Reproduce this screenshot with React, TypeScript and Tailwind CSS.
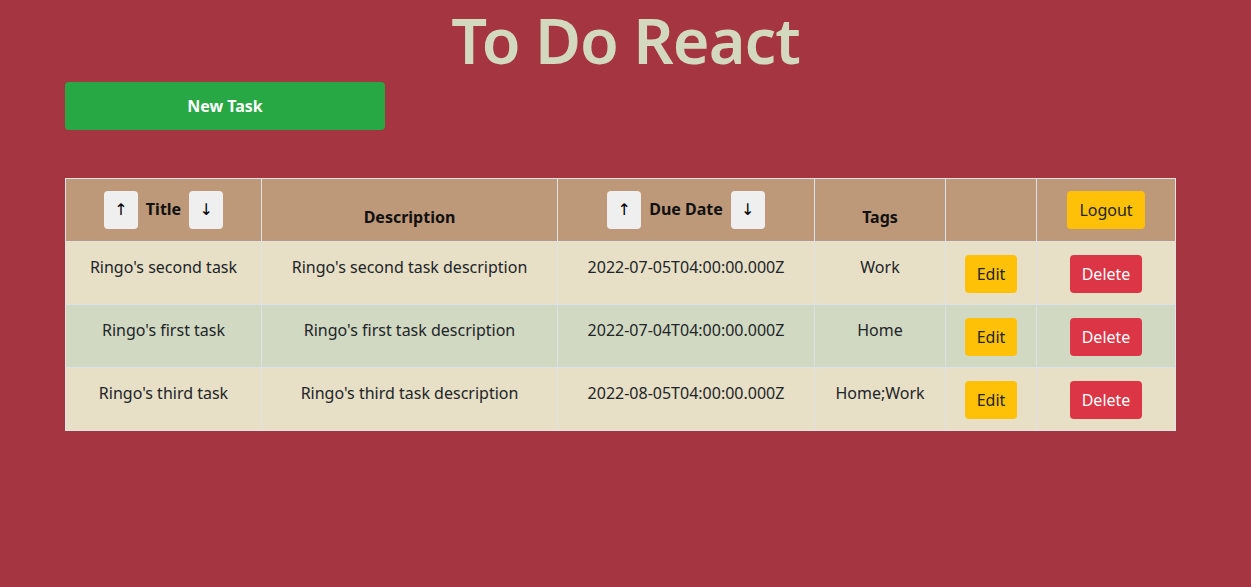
import React from "react";

const rows = [
  { title: "Ringo's second task", desc: "Ringo's second task description", due: "2022-07-05T04:00:00.000Z", tags: "Work", bg: "bg-[#e7dfc6]" },
  { title: "Ringo's first task", desc: "Ringo's first task description", due: "2022-07-04T04:00:00.000Z", tags: "Home", bg: "bg-[#d2d9c2]" },
  { title: "Ringo's third task", desc: "Ringo's third task description", due: "2022-08-05T04:00:00.000Z", tags: "Home;Work", bg: "bg-[#e7dfc6]" },
];

function ArrowBtn({ children }: { children: React.ReactNode }) {
  return (
    <button className="inline-block align-baseline w-[34px] bg-[#efefef] rounded-[4px] px-0 py-[7px] leading-6 text-[16px] text-black font-normal font-['DejaVu_Sans',sans-serif]">
      {children}
    </button>
  );
}

export default function App() {
  const th = "border border-[#dee2e6] px-3 py-3 align-bottom text-center font-bold text-[16px] leading-6 text-[#111]";
  const td = "border border-[#dee2e6] px-3 pt-3 pb-3 align-top text-center text-[16px] leading-6 text-[#212529]";
  const tdBtn = "border border-[#dee2e6] px-3 pt-[13px] pb-[11px] align-top text-center text-[16px] leading-6";
  return (
    <div className="min-h-[587px] w-full bg-[#a53541] font-['Noto_Sans',sans-serif]">
      <h1 className="text-center text-[63px] font-semibold leading-[80px] tracking-[-1px] text-[#d3d9bf]">To Do React</h1>
      <div className="pl-[65px] pt-[2px]">
        <button className="w-[320px] h-[48px] rounded-[4px] bg-[#28a745] text-white font-bold text-[16px]">New Task</button>
        <table className="mt-[48px] w-[1111px] table-fixed border-collapse">
          <colgroup>
            <col className="w-[196px]" />
            <col className="w-[296px]" />
            <col className="w-[257px]" />
            <col className="w-[131px]" />
            <col className="w-[91px]" />
            <col className="w-[139px]" />
          </colgroup>
          <thead>
            <tr className="bg-[#bd9879]">
              <th className={th}>
                <ArrowBtn>↑</ArrowBtn>
                <span className="mx-2">Title</span>
                <ArrowBtn>↓</ArrowBtn>
              </th>
              <th className={th}>Description</th>
              <th className={th}>
                <ArrowBtn>↑</ArrowBtn>
                <span className="mx-2">Due Date</span>
                <ArrowBtn>↓</ArrowBtn>
              </th>
              <th className={th}>Tags</th>
              <th className={th}></th>
              <th className={th}>
                <button className="inline-block bg-[#ffc107] rounded-[4px] px-3 py-[7px] leading-6 text-[16px] font-normal text-[#212529]">Logout</button>
              </th>
            </tr>
          </thead>
          <tbody>
            {rows.map((r) => (
              <tr key={r.title} className={r.bg}>
                <td className={td}><div className="mt-px">{r.title}</div></td>
                <td className={td}><div className="mt-px">{r.desc}</div></td>
                <td className={td}><div className="mt-px">{r.due}</div></td>
                <td className={td}><div className="mt-px">{r.tags}</div></td>
                <td className={tdBtn}>
                  <button className="block mx-auto bg-[#ffc107] rounded-[4px] px-3 py-[7px] leading-6 text-[16px] text-[#212529]">Edit</button>
                </td>
                <td className={tdBtn}>
                  <button className="block mx-auto bg-[#dc3545] rounded-[4px] px-3 py-[7px] leading-6 text-[16px] text-white">Delete</button>
                </td>
              </tr>
            ))}
          </tbody>
        </table>
      </div>
    </div>
  );
}
